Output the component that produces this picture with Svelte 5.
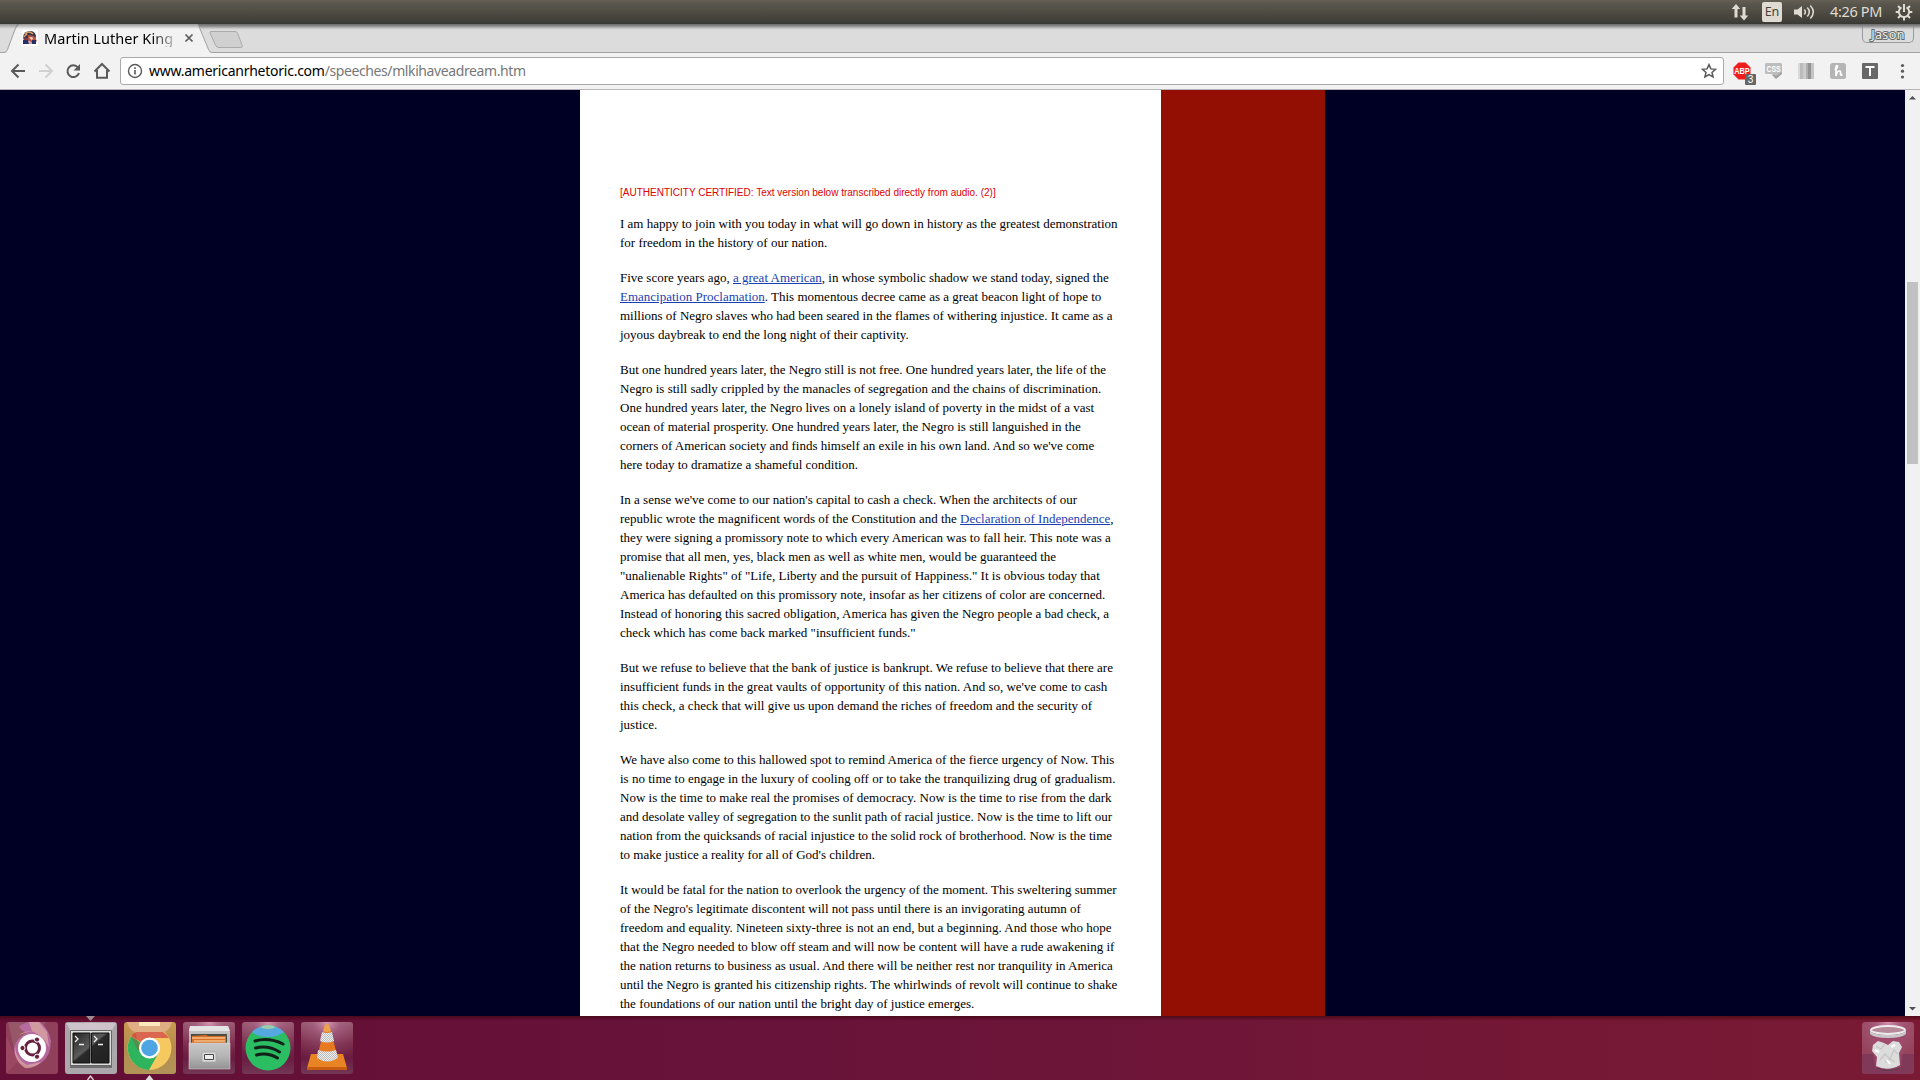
<script>
  // one string per set line; [brackets] mark links
  const paragraphs = [
    [
      'I am happy to join with you today in what will go down in history as the greatest demonstration',
      'for freedom in the history of our nation.'
    ],
    [
      'Five score years ago, [a great American], in whose symbolic shadow we stand today, signed the',
      '[Emancipation Proclamation]. This momentous decree came as a great beacon light of hope to',
      'millions of Negro slaves who had been seared in the flames of withering injustice. It came as a',
      'joyous daybreak to end the long night of their captivity.'
    ],
    [
      'But one hundred years later, the Negro still is not free. One hundred years later, the life of the',
      'Negro is still sadly crippled by the manacles of segregation and the chains of discrimination.',
      'One hundred years later, the Negro lives on a lonely island of poverty in the midst of a vast',
      'ocean of material prosperity. One hundred years later, the Negro is still languished in the',
      "corners of American society and finds himself an exile in his own land. And so we've come",
      'here today to dramatize a shameful condition.'
    ],
    [
      "In a sense we've come to our nation's capital to cash a check. When the architects of our",
      'republic wrote the magnificent words of the Constitution and the [Declaration of Independence],',
      'they were signing a promissory note to which every American was to fall heir. This note was a',
      'promise that all men, yes, black men as well as white men, would be guaranteed the',
      '"unalienable Rights" of "Life, Liberty and the pursuit of Happiness." It is obvious today that',
      'America has defaulted on this promissory note, insofar as her citizens of color are concerned.',
      'Instead of honoring this sacred obligation, America has given the Negro people a bad check, a',
      'check which has come back marked "insufficient funds."'
    ],
    [
      'But we refuse to believe that the bank of justice is bankrupt. We refuse to believe that there are',
      "insufficient funds in the great vaults of opportunity of this nation. And so, we've come to cash",
      'this check, a check that will give us upon demand the riches of freedom and the security of',
      'justice.'
    ],
    [
      'We have also come to this hallowed spot to remind America of the fierce urgency of Now. This',
      'is no time to engage in the luxury of cooling off or to take the tranquilizing drug of gradualism.',
      'Now is the time to make real the promises of democracy. Now is the time to rise from the dark',
      'and desolate valley of segregation to the sunlit path of racial justice. Now is the time to lift our',
      'nation from the quicksands of racial injustice to the solid rock of brotherhood. Now is the time',
      "to make justice a reality for all of God's children."
    ],
    [
      'It would be fatal for the nation to overlook the urgency of the moment. This sweltering summer',
      "of the Negro's legitimate discontent will not pass until there is an invigorating autumn of",
      'freedom and equality. Nineteen sixty-three is not an end, but a beginning. And those who hope',
      'that the Negro needed to blow off steam and will now be content will have a rude awakening if',
      'the nation returns to business as usual. And there will be neither rest nor tranquility in America',
      'until the Negro is granted his citizenship rights. The whirlwinds of revolt will continue to shake',
      'the foundations of our nation until the bright day of justice emerges.'
    ]
  ];
  const split = (t) => t.split(/(\[[^\]]+\])/).filter(Boolean);
</script>

<div class="screen">
  <header class="panel">
    <svg class="p-icon" width="18" height="18" viewBox="0 0 18 18"><path d="M5 1 9.300 6H6.500v8.500H3.500V6H.7zM13 17.500l-4.300-5h2.800V4h3v8.500h2.800z" fill="#dfdbd2" /></svg>
    <span class="lang">En</span>
    <svg class="p-sound" width="21" height="18" viewBox="0 0 21 18" fill="none" stroke="#dfdbd2" stroke-width="1.500"><path d="M0 6.500h3.500L8 3v12l-4.500-3.500H0z" fill="#dfdbd2" stroke="none" /><path d="M10.300 6.500q2.200 2.500 0 5M13.300 4.500q4 4.500 0 9M16.300 2.500q6 6.500 0 13" /></svg>
    <span class="clock">4:26 PM</span>
    <svg class="p-gear" width="18" height="18" viewBox="0 0 18 18" fill="none" stroke="#dfdbd2"><path d="M6.500 4.300a5.200 5.200 0 1 0 5 0" stroke-width="2" /><path d="M9 1v8" stroke-width="2" /><path d="m3 3 2.500 2.500M15 3l-2.500 2.500M3 15l2.500-2.500M15 15l-2.500-2.500M.7 9h3M14.300 9h3M9 14v3.500" stroke-width="2" /></svg>
  </header>

  <div class="tabs">
    <svg class="tabshapes" width="250" height="29" viewBox="0 0 250 29">
      <path d="M0 28.500H5Q7 28.500 8 26L15.500 6Q17 2 19 0H198L208.500 26Q209.500 28.500 212 28.500V29H0z" fill="#f2f2f2" />
      <path d="M0 28H4Q6.500 28 7.500 25L15 5Q16 2 18 0H0z" fill="#dcdcdc" />
      <path d="M0 28.500H4Q6.500 28.500 7.500 25.500L15.500 4Q16.500 1 18 .5M198 0 208.500 25.500Q209.500 28.500 212 28.500H250" fill="none" stroke="#a3a3a3" />
      <path d="M211 7.500h24q2 0 2.700 2l4.500 12q.8 2-1.700 2H219q-2.500 0-3.300-2l-5.500-12q-.8-2 .8-2z" fill="#d0d0d0" stroke="#aaa" />
    </svg>
    <div class="tabcontent">
      <svg class="favicon" width="16" height="16" viewBox="0 0 16 16"><path d="M0 0h16v16H0z" fill="#fff" /><path d="M1 7Q2 1 8 1q5 0 6 5l-1 5H2z" fill="#36384f" /><path d="M3 4q4-4 8 0M1.500 7 5 4" stroke="#dca05f" stroke-width="1.500" fill="none" /><path d="m6 5 6 1 3 5-3 2-6-2z" fill="#bb5645" /><path d="m7 7 4 .5-1 3z" fill="#f1ddc7" /><path d="M1 10h5l1 4H1zM10 10h4v4h-4z" fill="#242e67" /><path d="M2 9h4M7 13h3" stroke="#c33a3a" /></svg>
      <span class="title">Martin Luther King</span>
      <svg width="10" height="10" viewBox="0 0 10 10"><path d="m1.500 1.500 7 7m0-7-7 7" stroke="#5a5a5a" stroke-width="1.700" /></svg>
    </div>
    <div class="user">Jason</div>
  </div>

  <div class="toolbar">
    <svg class="nav" width="112" height="20" viewBox="0 0 112 20" fill="none" stroke="#5a5a5a" stroke-width="2">
      <path d="M15 10H2.500M8.500 3.500 2 10l6.500 6.500" />
      <path d="M29 10h12.500M35.500 3.500 42 10l-6.500 6.500" stroke="#d0d0d0" />
      <path d="M68 6.500A5.900 5.900 0 1 0 69 12" /><path d="M70 3v6.500h-6.500z" fill="#5a5a5a" stroke="none" />
      <path d="M84.500 10.500 92 3l7.500 7.500M87 9v7.700h10V9" />
    </svg>
    <div class="url">
      <svg width="16" height="16" viewBox="0 0 16 16" fill="none" stroke="#5a5a5a"><circle cx="8" cy="8" r="6.500" stroke-width="1.400" /><path d="M8 7v4.500M8 4.300v1.700" stroke-width="1.600" /></svg>
      <span class="addr"><b>www.americanrhetoric.com</b><i>/speeches/mlkihaveadream.htm</i></span>
      <svg class="star" width="16" height="16" viewBox="0 0 16 16"><path d="m8 1.600 1.900 4.300 4.600.4-3.500 3.100 1.100 4.600L8 11.600 3.900 14 5 9.400 1.500 6.300l4.600-.4z" fill="none" stroke="#5a5a5a" stroke-width="1.500" /></svg>
    </div>
    <svg class="ext" width="190" height="28" viewBox="0 0 190 28">
      <path d="M8.500 5.500h7l5 5v7l-5 5h-7l-5-5v-7z" fill="#f01d1d" />
      <text x="12" y="17.200" font-size="9" font-weight="700" fill="#fff" text-anchor="middle" textLength="15.500" lengthAdjust="spacingAndGlyphs">ABP</text>
      <rect x="15" y="17" width="11" height="11" rx="1" fill="#666" />
      <text x="20.500" y="26" font-size="10" fill="#fff" text-anchor="middle">3</text>
      <path d="M36 6h15l1 1v10h-1l-4 4-4-4h-7l-1-1V7z" fill="#bdbdbd" />
      <path d="m43 17 3 2 5-4 1 2-6 5-4-4z" fill="#a0a0a0" />
      <text x="43.500" y="14.500" font-size="9.500" font-weight="700" fill="#fff" text-anchor="middle" textLength="14" lengthAdjust="spacingAndGlyphs">CSS</text>
      <path d="M68 6h2v16h-2z" fill="#d9d9d9" /><path d="M70 6h3v16h-3z" fill="#bbb" /><path d="M73 6h3v16h-3z" fill="#ccc" /><path d="M76 6h2v16h-2z" fill="#b0b0b0" /><path d="M78 6h3v16h-3z" fill="#929292" /><path d="M81 6h3v16h-3z" fill="#c4c4c4" />
      <rect x="100" y="6" width="16" height="16" rx="2.500" fill="#b5b5b5" />
      <path d="M104.500 12.500q3.500-1 3-3.500-1.500-1-1.500 2v8q1-5 3.500-5 1.500 0 1 2.500t2 1" fill="none" stroke="#fff" stroke-width="1.700" />
      <rect x="132" y="6" width="16" height="16" rx="1" fill="#686868" />
      <path d="M135.500 10h9M140 9.500V19" stroke="#fff" stroke-width="2" />
      <g fill="#5a5a5a"><circle cx="172.500" cy="8.500" r="1.600" /><circle cx="172.500" cy="14.200" r="1.600" /><circle cx="172.500" cy="20" r="1.600" /></g>
    </svg>
  </div>

  <main class="page">
    <div class="side"></div>
    <article>
      <p class="cert">[AUTHENTICITY CERTIFIED: Text version below transcribed directly from audio. (2)]</p>
      {#each paragraphs as lines}
        <p>
          {#each lines as text}
            <span class="line">{#each split(text) as part}{#if part[0] === '['}<a href="#top">{part.slice(1, -1)}</a>{:else}{part}{/if}{/each}</span>
          {/each}
        </p>
      {/each}
    </article>
    <div class="red"></div>
    <div class="rest"></div>
    <div class="scroll">
      <svg width="15" height="15" viewBox="0 0 15 15"><path d="M4 9.500h7L7.500 6z" fill="#505050" /></svg>
      <div class="thumb"></div>
      <svg width="15" height="15" viewBox="0 0 15 15"><path d="M4 6h7L7.500 9.500z" fill="#505050" /></svg>
    </div>
  </main>

  <footer class="dock">
    <svg width="360" height="64" viewBox="0 0 360 64">
      <defs>
        <radialGradient id="glow" cx=".5" cy="0" r=".75"><stop offset="0" stop-color="#e3a5bb" stop-opacity=".85" /><stop offset=".35" stop-color="#b978a0" stop-opacity=".4" /><stop offset="1" stop-color="#9c6077" stop-opacity="0" /></radialGradient>
        <linearGradient id="tile" x2="0" y2="1"><stop stop-color="#95566a" /><stop offset=".4" stop-color="#7b2b4a" /><stop offset=".7" stop-color="#6a1c42" /><stop offset="1" stop-color="#733755" /></linearGradient>
        <linearGradient id="metal" x2="0" y2="1"><stop stop-color="#c8c8c8" /><stop offset=".5" stop-color="#b5b5b5" /><stop offset="1" stop-color="#929292" /></linearGradient>
        <linearGradient id="dark" x2="1" y2="1"><stop stop-color="#222" /><stop offset=".45" stop-color="#5c5c5c" /><stop offset=".5" stop-color="#292929" /><stop offset="1" stop-color="#202020" /></linearGradient>
        <linearGradient id="gold" x2="0" y2="1"><stop stop-color="#c99b50" /><stop offset=".5" stop-color="#b58a4e" /><stop offset="1" stop-color="#b29458" /></linearGradient>
        <pattern id="check" width="2" height="2" patternUnits="userSpaceOnUse"><path d="M0 0h2v2H0z" fill="#eee" /><path d="M0 0h1v1H0zM1 1h1v1H1z" fill="#bbb" /></pattern>
      </defs>
      <!-- dash -->
      <rect x="6" y="6" width="52" height="52" rx="3" fill="#91405c" />
      <path d="M8 6h38l-8 11-16 3-8 12z" fill="#965769" />
      <path d="M28 6h12q9 7 11 19 0 15-10 22-9 6-19 1-8-5-8-16 3-11 13-15-7-3-8-7z" fill="#bd70ad" opacity=".8" />
      <path d="M29 6h10l8 10 2 15q-7-13-18-16L19 19q5-4 13-4zM15 31q1 12 12 18l14-3q-7 7-16 6-12-8-10-21z" fill="#dba8a3" opacity=".75" />
      <path d="M6 20q6 13 12 25l-12 13z" fill="#a04c66" opacity=".7" />
      <circle cx="32" cy="32" r="14" fill="#fff" /><circle cx="32.500" cy="32" r="7" fill="none" stroke="#66203e" stroke-width="3" />
      <g fill="#66203e" stroke="#fff" stroke-width="1"><circle cx="22.500" cy="32" r="2.600" /><circle cx="37" cy="23.500" r="2.600" /><circle cx="37" cy="40.700" r="2.600" /></g>
      <!-- terminal -->
      <path d="M86 0h9l-4.500 5z" fill="#9e8b94" /><path d="M87.500 64l3-4 3 4" fill="#6a1736" stroke="#e5d8de" stroke-width="1.300" />
      <rect x="65" y="6" width="52" height="52" rx="3" fill="#aaa8aa" /><rect x="65" y="6" width="52" height="52" rx="3" fill="url(#glow)" opacity=".35" />
      <path d="M66 7h50l-5 9H71z" fill="#ddd6dd" opacity=".65" />
      <path d="M70 48h42v4H70z" fill="#555" opacity=".7" /><path d="M70.500 14.500h41v35h-41z" fill="#ddd" stroke="#666" />
      <path d="M73 17h17v30H73zM91.500 17H109v30H91.500z" fill="url(#dark)" stroke="#111" />
      <path d="m75 20 3 3-3 3M79 28.500h5M94 20l3 3-3 3M98 28.500h5" fill="none" stroke="#eee" stroke-width="1.300" />
      <!-- browser -->
      <rect x="124" y="6" width="52" height="52" rx="3" fill="url(#gold)" />
      <circle cx="149.500" cy="32" r="22" fill="#f5c95f" />
      <path d="M127 6h45q-2 8-8 10h-29q-6-2-8-10z" fill="#dfae82" /><path d="M139 6h21v4h-21z" fill="#ffe8b9" />
      <path d="M149.500 32 131 20.500a22 22 0 0 0 18 33.500l9.500-17z" fill="#2db45d" /><path d="M149.500 32 131.500 20q1-3 4.500-4h27q4 3 6 6h-19.500l-9 15z" fill="#da6650" />
      <path d="m131 20 4-4 5 17-2 2z" fill="#a94732" opacity=".4" />
      <circle cx="149.500" cy="32" r="10.500" fill="#fff" /><circle cx="149.500" cy="32" r="8.300" fill="#4ea5e2" />
      <path d="M145.500 64l4-5 4 5z" fill="#ddd" />
      <!-- files -->
      <rect x="183" y="6" width="52" height="52" rx="3" fill="url(#tile)" /><rect x="183" y="6" width="52" height="52" rx="3" fill="url(#glow)" />
      <path d="M190 10h38l2 6v37h-41V16z" fill="url(#metal)" /><path d="M190 10h38l2 5h-41z" fill="#e4e4e4" /><path d="M191 18h36v9h-36z" fill="#4c4c46" /><path d="m192 20 14-1 2 1h18v7h-34z" fill="#db6e25" /><path d="M192 22h33M194 25h31" stroke="#ffe8bb" /><path d="M189 27h41v26h-41z" fill="url(#metal)" stroke="#ddd" stroke-width=".5" />
      <rect x="202" y="36" width="14" height="10" rx="1" fill="#ddd" stroke="#aaa" /><path d="M204.500 38.500h9v5h-9z" fill="#eee" stroke="#444" />
      <!-- music -->
      <rect x="242" y="6" width="52" height="52" rx="3" fill="url(#tile)" /><rect x="242" y="6" width="52" height="52" rx="3" fill="url(#glow)" />
      <circle cx="268" cy="32" r="22.500" fill="#2abd62" /><path d="M252 16a22.500 22.500 0 0 1 32 0q-6 5-16 5t-16-5z" fill="#55a9df" /><path d="M260 11q8-4 16 0-3 2-8 2t-8-2z" fill="#9ecda7" />
      <path d="M255 25q14-4 28 3M255.500 32q13-3 24 4M256.500 39q11-3 21 3" fill="none" stroke="#112018" stroke-width="3" stroke-linecap="round" />
      <!-- player -->
      <rect x="301" y="6" width="52" height="52" rx="3" fill="url(#tile)" /><rect x="301" y="6" width="52" height="52" rx="3" fill="url(#glow)" />
      <path d="M311 38h32l4 14v2h-40v-2z" fill="#e98424" /><path d="M307 51h40v3h-40z" fill="#c65d12" /><path d="M325 9q2-2 4 0l9 33q-11 6-21 0z" fill="#e77920" /><path d="m322 16-2 9q7 3 14 0l-2-9q-5 2-10 0zM318 34l-1 8q10 7 21 0l-2-8q-9 3-18 0z" fill="url(#check)" /><path d="M325 9q2-2 4 0l2 6q-4 2-8 0z" fill="#eda34d" />
    </svg>
    <svg width="64" height="64" viewBox="0 0 64 64">
      <rect x="6" y="6" width="52" height="52" rx="3" fill="#96435d" /><rect x="6" y="6" width="52" height="52" rx="3" fill="url(#glow)" /><path d="M6 38h52v17l-3 3H9l-3-3z" fill="#713456" opacity=".6" />
      <path d="m15 17 4 34q13 6 26 0l4-34z" fill="#a04a6c" opacity=".65" />
      <path d="m17 29 5-4 6 2 4 2 5-4 6 1 3 5-3 6 1 12q-12 7-24 1l1-9-5-6z" fill="#dcdcdc" /><path d="m20 30 5 3 4-5m-5 16 5-6 5 5 4-9 4 4m-13 8 5-3 5 3" fill="none" stroke="#c6c6c6" stroke-width="1.200" /><path d="m19 34 4 2m12-5 4-2m-8 15 3 4" stroke="#fff" stroke-width="2" />
      <ellipse cx="32" cy="14" rx="17" ry="4" fill="#b78b9a" stroke="#ededed" stroke-width="2" /><path d="M14 14q2 5 18 5t18-5v4q-4 4-18 4t-18-4z" fill="#c8c8c8" /><path d="M21 52q11 5 22 0" fill="none" stroke="#54404a" />
    </svg>
  </footer>
</div>

<style>
  :global(body) { margin: 0; overflow: hidden; }
  .screen { width: 1920px; height: 1080px; display: flex; flex-direction: column; overflow: hidden; font-family: 'Noto Sans', sans-serif; }
  svg { display: block; flex: none; }
  .panel { height: 24px; flex: none; box-sizing: border-box; background: linear-gradient(#646054, #5a574d 15%, #403e38 90%, #3a3833); display: flex; align-items: center; padding-right: 7px; justify-content: flex-end; color: #dfdbd2; }
  .p-icon { margin-right: 13px; }
  .lang { width: 20px; height: 20px; border-radius: 2px; background: #dfdbd2; color: #45433c; font-size: 12.500px; line-height: 20px; text-align: center; }
  .p-sound { margin-left: 12px; margin-right: 15px; }
  .clock { width: 53px; font-size: 14.500px; line-height: 23px; letter-spacing: -.35px; white-space: nowrap; margin-right: 12px; padding-bottom: 1px; }
  .tabs { height: 29px; flex: none; background: linear-gradient(#777, #999 2px, #c9c9c9 4px, #dcdcdc 6px); display: flex; justify-content: space-between; position: relative; box-shadow: inset 0 -1px #a3a3a3; }
  .tabs::after { content: ''; position: absolute; inset: 0 0 auto; height: 5px; background: linear-gradient(#666a, #8885 60%, transparent); }
  .tabcontent { position: absolute; left: 22px; top: 5px; display: flex; align-items: center; }
  .title { margin-left: 6px; width: 128px; font-size: 14.500px; line-height: 18px; letter-spacing: .05px; white-space: nowrap; overflow: hidden; margin-right: 12px; background: linear-gradient(90deg, #000 84%, #aaa 100%); background-clip: text; color: transparent; }
  .user { width: 52px; height: 18px; margin: 1px 6px 0 auto; border: 1px solid #999; border-top: 0; border-radius: 0 0 5px 5px; box-sizing: border-box; font-size: 12.500px; line-height: 20px; letter-spacing: .4px; text-align: center; color: #eee; -webkit-text-stroke: 2px #666; paint-order: stroke fill; }
  .toolbar { height: 37px; flex: none; box-sizing: border-box; background: #f2f2f2; border-bottom: 1px solid #b6b4b6; display: flex; align-items: center; padding-left: 10px; }
  .url { width: 1604px; height: 28px; margin-left: -2px; flex: none; box-sizing: border-box; border: 1px solid #a9a9a9; border-radius: 3px; background: #fff; display: flex; align-items: center; padding: 0 6px; }
  .addr { margin-left: 6px; flex: 1; font-size: 14px; line-height: 24px; white-space: nowrap; padding-bottom: 1px; }
  .addr b { font-weight: 400; color: #000; display: inline-block; letter-spacing: -.25px; }
  .addr i { font-style: normal; color: #777; display: inline-block; letter-spacing: -.4px; }
  .ext { margin-left: 6px; }
  .ext text { font-family: 'Liberation Sans', sans-serif; }
  .page { flex: 1; min-height: 0; display: flex; background: #000024; overflow: hidden; }
  .side { width: 580px; flex: none; }
  article { width: 581px; flex: none; box-sizing: border-box; background: #fff; padding: 93px 0 0 40px; }
  p { margin: 0 0 16px; font: 13px/19px 'Liberation Serif', serif; color: #000; }
  .cert { font: 10px/19px 'Liberation Sans', sans-serif; color: #e00000; margin-bottom: 12px; white-space: nowrap; }
  .line { display: block; white-space: nowrap; }
  a { color: #1a3fb0; text-decoration: underline; }
  .red { width: 164px; flex: none; background: #930f04; }
  .rest { flex: 1; }
  .scroll { width: 15px; flex: none; background: #f1f1f1; display: flex; flex-direction: column; align-items: center; }
  .thumb { width: 11px; height: 182px; margin: 177px 0 auto; background: #c1c1c1; }
  .dock { height: 64px; flex: none; display: flex; justify-content: space-between; background: linear-gradient(#3008 0, transparent 5px), linear-gradient(90deg, #630f35, #68133a 40%, #7a1a34); }
</style>
